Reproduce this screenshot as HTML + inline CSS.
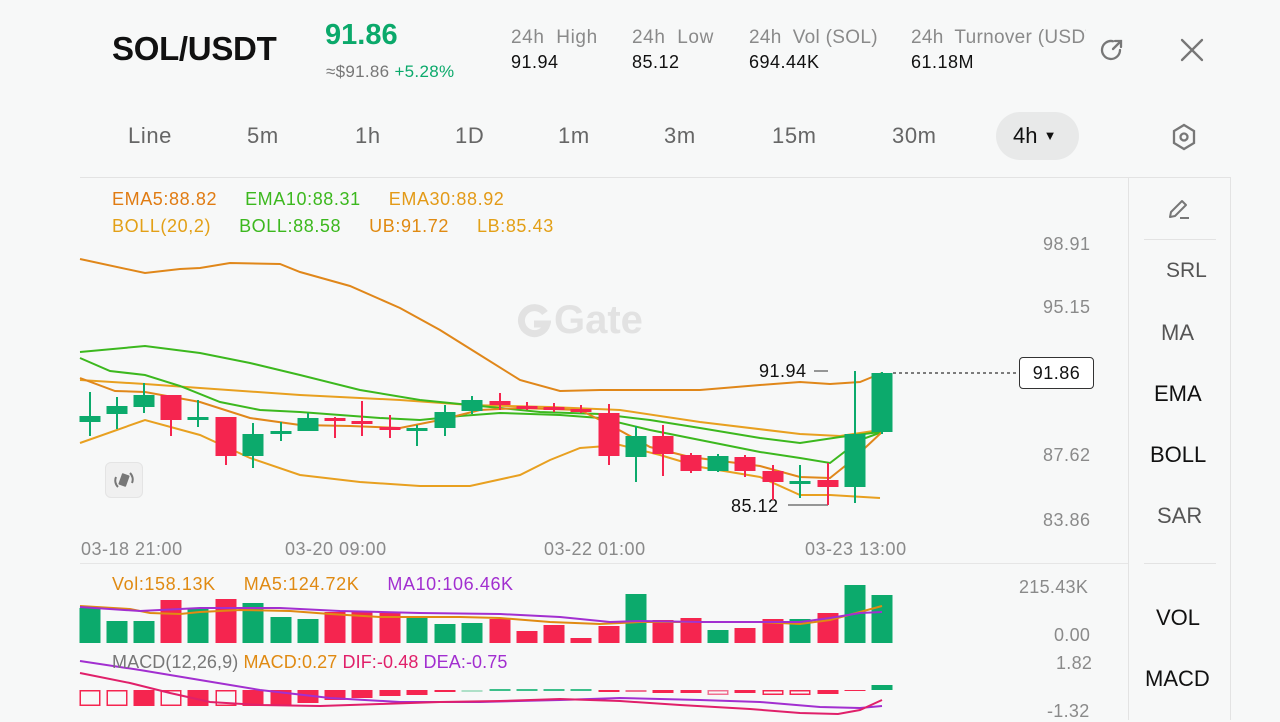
<!DOCTYPE html>
<html><head><meta charset="utf-8"><style>
*{margin:0;padding:0;box-sizing:border-box}
body{width:1280px;height:720px;background:#f7f8f8;font-family:"Liberation Sans",sans-serif;position:relative;overflow:hidden;color:#111}
.a{position:absolute;white-space:nowrap}
.g{color:#8a8a8a}
.t{top:123px;font-size:22px;color:#666;letter-spacing:0.6px}
.lg{font-size:18px;letter-spacing:0.6px}
.lg span{margin-right:28px}
</style></head><body>
<div class="a" style="left:112px;top:30px;font-size:33px;font-weight:bold;letter-spacing:-0.3px">SOL/USDT</div>
<div class="a" style="left:325px;top:19px;font-size:29px;font-weight:bold;color:#0ba96b">91.86</div>
<div class="a" style="left:326px;top:62px;font-size:17px;color:#777;letter-spacing:0.3px">≈$91.86 <span style="color:#0ba96b">+5.28%</span></div>
<div class="a g" style="left:511px;top:27px;font-size:19px;letter-spacing:0.6px">24h&nbsp; High</div>
<div class="a" style="left:511px;top:52px;font-size:18px;letter-spacing:0.5px">91.94</div>
<div class="a g" style="left:632px;top:27px;font-size:19px;letter-spacing:0.6px">24h&nbsp; Low</div>
<div class="a" style="left:632px;top:52px;font-size:18px;letter-spacing:0.5px">85.12</div>
<div class="a g" style="left:749px;top:27px;font-size:19px;letter-spacing:0.3px">24h&nbsp; Vol (SOL)</div>
<div class="a" style="left:749px;top:52px;font-size:18px;letter-spacing:0.5px">694.44K</div>
<div class="a g" style="left:911px;top:27px;font-size:19px;width:175px;overflow:hidden;letter-spacing:0.3px">24h&nbsp; Turnover (USDT)</div>
<div class="a" style="left:911px;top:52px;font-size:18px;letter-spacing:0.5px">61.18M</div>
<svg class="a" style="left:1098px;top:36px" width="28" height="28" viewBox="0 0 28 28" fill="none" stroke="#777" stroke-width="2.3" stroke-linecap="round"><path d="M22 14a9 9 0 1 1-7-8.8"/><path d="M15 13l8-8M17 5h6v6"/></svg>
<svg class="a" style="left:1179px;top:37px" width="26" height="26" viewBox="0 0 26 26" stroke="#777" stroke-width="2.3" stroke-linecap="round"><path d="M3 3l20 20M23 3L3 23"/></svg>
<div class="a t" style="left:128px">Line</div>
<div class="a t" style="left:247px">5m</div>
<div class="a t" style="left:355px">1h</div>
<div class="a t" style="left:455px">1D</div>
<div class="a t" style="left:558px">1m</div>
<div class="a t" style="left:664px">3m</div>
<div class="a t" style="left:772px">15m</div>
<div class="a t" style="left:892px">30m</div>
<div class="a" style="left:996px;top:112px;width:83px;height:48px;border-radius:24px;background:#e8e9e9"></div>
<div class="a" style="top:123px;font-size:22px;color:#111;left:1013px">4h <span style="font-size:13px;position:relative;top:-3px">▼</span></div>
<svg class="a" style="left:1170px;top:122px" width="28" height="30" viewBox="0 0 28 30" fill="none" stroke="#777" stroke-width="2.3"><path d="M14 3l10 6v12l-10 6-10-6V9z"/><circle cx="14" cy="15" r="3.5"/></svg>
<div class="a" style="left:80px;top:177px;width:1150px;height:1px;background:#e3e3e3"></div>
<div class="a" style="left:1128px;top:177px;width:1px;height:543px;background:#e3e3e3"></div>
<div class="a" style="left:1230px;top:177px;width:1px;height:543px;background:#e3e3e3"></div>
<div class="a" style="left:80px;top:563px;width:1048px;height:1px;background:#e6e6e6"></div>
<svg class="a" style="left:1166px;top:196px" width="28" height="26" viewBox="0 0 28 26" fill="none" stroke="#777" stroke-width="2" stroke-linejoin="round"><path d="M4 21l1-5L16 5l4 4L9 20z"/><path d="M14 22h9"/></svg>
<div class="a" style="left:1144px;top:239px;width:72px;height:1px;background:#e3e3e3"></div>
<div class="a" style="left:1166px;top:259px;font-size:21px;color:#555">SRL</div>
<div class="a" style="left:1161px;top:320px;font-size:22px;color:#555">MA</div>
<div class="a" style="left:1154px;top:381px;font-size:22px;color:#111">EMA</div>
<div class="a" style="left:1150px;top:442px;font-size:22px;color:#111">BOLL</div>
<div class="a" style="left:1157px;top:503px;font-size:22px;color:#555">SAR</div>
<div class="a" style="left:1144px;top:563px;width:72px;height:1px;background:#e3e3e3"></div>
<div class="a" style="left:1156px;top:605px;font-size:22px;color:#111">VOL</div>
<div class="a" style="left:1145px;top:666px;font-size:22px;color:#111">MACD</div>
<div class="a lg" style="left:112px;top:189px"><span style="color:#e07b12">EMA5:88.82</span><span style="color:#3cb81e">EMA10:88.31</span><span style="color:#e39a17">EMA30:88.92</span></div>
<div class="a lg" style="left:112px;top:216px"><span style="color:#e3a017">BOLL(20,2)</span><span style="color:#3cb81e">BOLL:88.58</span><span style="color:#e08a12">UB:91.72</span><span style="color:#e3a017">LB:85.43</span></div>
<svg class="a" style="left:517px;top:304px" width="34" height="34" viewBox="0 0 34 34" fill="none" stroke="#e2e2e2" stroke-width="7"><path d="M28 9A13 13 0 1 0 30 20H17"/></svg>
<div class="a" style="left:554px;top:298px;font-size:40px;font-weight:bold;color:#e2e2e2">Gate</div>
<div class="a g" style="left:1043px;top:234px;font-size:18px;letter-spacing:0.5px">98.91</div>
<div class="a g" style="left:1043px;top:297px;font-size:18px;letter-spacing:0.5px">95.15</div>
<div class="a g" style="left:1043px;top:445px;font-size:18px;letter-spacing:0.5px">87.62</div>
<div class="a g" style="left:1043px;top:510px;font-size:18px;letter-spacing:0.5px">83.86</div>
<div class="a" style="left:1019px;top:357px;width:75px;height:32px;border:1.5px solid #333;border-radius:4px;background:#fff;font-size:18px;text-align:center;line-height:30px;letter-spacing:0.5px">91.86</div>
<div class="a g" style="left:81px;top:539px;font-size:18px;letter-spacing:0.5px">03-18 21:00</div>
<div class="a g" style="left:285px;top:539px;font-size:18px;letter-spacing:0.5px">03-20 09:00</div>
<div class="a g" style="left:544px;top:539px;font-size:18px;letter-spacing:0.5px">03-22 01:00</div>
<div class="a g" style="left:805px;top:539px;font-size:18px;letter-spacing:0.5px">03-23 13:00</div>
<div class="a" style="left:759px;top:361px;font-size:18px;letter-spacing:0.5px">91.94</div>
<div class="a" style="left:731px;top:496px;font-size:18px;letter-spacing:0.5px">85.12</div>
<div class="a" style="left:105px;top:462px;width:38px;height:36px;border-radius:6px;background:#f0f0f0;border:1px solid #e4e4e4"></div>
<svg class="a" style="left:113px;top:469px" width="22" height="22" viewBox="0 0 22 22" fill="#777"><rect x="7" y="5" width="8" height="12" rx="1" transform="rotate(20 11 11)"/><path d="M3 8a9 9 0 0 0 2 10M19 14a9 9 0 0 0-2-10" stroke="#777" stroke-width="2" fill="none"/></svg>
<svg class="a" style="left:0;top:0" width="1128" height="720">
<g fill="none" stroke-width="2">
<polyline stroke="#e0871a" points="80,259 145,273 180,269 200,268 230,263 280,264 300,272 350,286 400,308 440,330 480,355 520,380 560,391 600,390 650,390 700,390 760,385 800,382 830,384 860,382 882,373"/>
<polyline stroke="#e8a020" points="80,380 145,384 200,388 300,395 400,400 470,405 550,407 620,410 700,422 800,434 840,436 880,430"/>
<polyline stroke="#e8a020" points="80,443 145,420 200,435 250,458 300,475 360,482 420,486 470,486 520,475 550,460 580,448 620,445 660,455 700,467 760,477 800,495 830,495 880,498"/>
<polyline stroke="#3cb81e" points="80,352 145,346 200,353 250,363 300,375 360,390 420,400 480,406 540,412 600,414 650,420 700,428 760,438 800,443 840,437 880,432"/>
<polyline stroke="#3cb81e" points="80,358 110,371 145,375 180,386 220,402 260,410 300,412 380,418 420,420 460,416 500,413 560,415 600,418 650,430 700,440 760,452 800,458 830,463 860,440 882,432"/>
<polyline stroke="#e0871a" points="80,378 115,391 145,392 200,402 250,418 300,425 350,426 400,428 440,420 480,410 520,408 580,410 610,425 650,447 690,457 760,466 800,477 830,478 850,462 882,432"/>
<path stroke="#333" stroke-width="1" d="M814,371h14M788,505h40"/>
<path stroke="#333" stroke-width="1.2" stroke-dasharray="3,3" d="M893,373h126"/>
</g>
<g id="c"></g>
<g id="v"></g>
<g id="m"></g>
</svg>
<div class="a lg" style="left:112px;top:574px"><span style="color:#e08a12">Vol:158.13K</span><span style="color:#e08a12">MA5:124.72K</span><span style="color:#a22fd0">MA10:106.46K</span></div>
<div class="a g" style="left:1019px;top:577px;font-size:18px;letter-spacing:0.3px">215.43K</div>
<div class="a g" style="left:1054px;top:625px;font-size:18px;letter-spacing:0.3px">0.00</div>
<div class="a" style="left:112px;top:652px;font-size:18px;letter-spacing:0.1px"><span style="color:#777">MACD(12,26,9)</span> <span style="color:#e08a12">MACD:0.27</span> <span style="color:#e0206a">DIF:-0.48</span> <span style="color:#a22fd0">DEA:-0.75</span></div>
<div class="a g" style="left:1056px;top:653px;font-size:18px;letter-spacing:0.3px">1.82</div>
<div class="a g" style="left:1047px;top:701px;font-size:18px;letter-spacing:0.3px">-1.32</div>
<script>
var G="#0caa6c",R="#f5254f",ns="http://www.w3.org/2000/svg";
var X=[90,117,144,171,198,226,253,281,308,335,362,390,417,445,472,500,527,554,581,609,636,663,691,718,745,773,800,828,855,882];
var C=[[416,422,392,436,G],[406,414,397,429,G],[395,407,383,413,G],[395,420,395,436,R],[417,420,400,427,G],[417,456,417,465,R],[434,456,423,468,G],[431,434,422,441,G],[418,431,413,431,G],[418,421,417,438,R],[421,424,401,436,R],[427,429,415,438,R],[428,430,425,446,G],[412,428,405,436,G],[400,411,396,414,G],[401,405,393,410,R],[406,409,402,410,R],[407,410,403,412,R],[409,411,405,413,R],[413,456,404,465,R],[436,457,426,482,G],[436,454,425,476,R],[455,471,453,473,R],[456,471,454,472,G],[457,471,455,477,R],[471,482,465,500,R],[481,483,465,498,G],[480,487,463,505,R],[434,487,371,503,G],[373,432,372,434,G]];
function el(t,a,p){var e=document.createElementNS(ns,t);for(var k in a)e.setAttribute(k,a[k]);document.getElementById(p).appendChild(e);return e}
C.forEach(function(c,i){var x=X[i];el("rect",{x:x-1,y:c[2],width:2,height:c[3]-c[2],fill:c[4]},"c");el("rect",{x:x-10.5,y:c[0],width:21,height:Math.max(3,c[1]-c[0]),fill:c[4]},"c")});
var V=[[608,G],[621,G],[621,G],[600,R],[608,G],[599,R],[603,G],[617,G],[619,G],[612,R],[612,R],[613,R],[618,G],[624,G],[623,G],[619,R],[631,R],[625,R],[638,R],[626,R],[594,G],[620,R],[618,R],[630,G],[628,R],[619,R],[619,G],[613,R],[585,G],[595,G]];
V.forEach(function(v,i){el("rect",{x:X[i]-10.5,y:v[0],width:21,height:643-v[0],fill:v[1]},"v")});
el("polyline",{points:"80,606 130,609 150,613 180,614 200,612 240,610 290,611 330,614 380,617 420,617 460,617 500,618 550,622 600,624 640,622 700,622 760,622 800,624 830,620 860,612 882,606",fill:"none",stroke:"#e08a12","stroke-width":2},"v");
el("polyline",{points:"80,607 140,611 200,608 280,608 340,611 420,613 500,614 560,617 610,622 640,621 700,622 760,622 800,622 830,618 860,613 882,612",fill:"none",stroke:"#a22fd0","stroke-width":2},"v");
var M=[[690,706,0],[690,706,0],[690,706,1],[690,706,0],[690,706,1],[690,706,0],[690,706,1],[690,705,1],[690,703,1],[690,700,1],[690,698,1],[690,696,1],[690,695,1],[690,692,1],[690,691,2],[689,691,3],[689,691,4],[689,691,4],[689,691,4],[690,692,1],[690,692,5],[690,693,0],[690,693,0],[690,695,5],[690,693,1],[690,695,0],[690,695,0],[690,694,1],[690,691,1],[685,690,6]];
M.forEach(function(m,i){var x=X[i]-10.5,h=m[1]-m[0];if(m[2]==0)el("rect",{x:x+.75,y:m[0]+.75,width:19.5,height:h-1.5,fill:"none",stroke:R,"stroke-width":1.5},"m");else if(m[2]==1)el("rect",{x:x,y:m[0],width:21,height:h,fill:R},"m");else if(m[2]==5)el("rect",{x:x+.75,y:m[0]+.75,width:19.5,height:h-1.5,fill:"none",stroke:"#f07090","stroke-width":1.5},"m");else el("rect",{x:x,y:m[0],width:21,height:Math.max(2,h),fill:m[2]==6?G:(m[2]==2?"#aee0c8":"#3cbf8a")},"m")});
el("polyline",{points:"80,661 140,670 200,680 260,690 330,698 400,702 480,702 560,700 620,698 700,700 760,702 820,707 860,708 882,706",fill:"none",stroke:"#a22fd0","stroke-width":2},"m");
el("polyline",{points:"80,673 130,683 170,693 210,702 260,705 320,706 380,704 440,702 500,701 560,699 620,701 680,705 750,709 800,713 838,714 860,710 882,700",fill:"none",stroke:"#e0206a","stroke-width":2},"m");
</script>
</body></html>
